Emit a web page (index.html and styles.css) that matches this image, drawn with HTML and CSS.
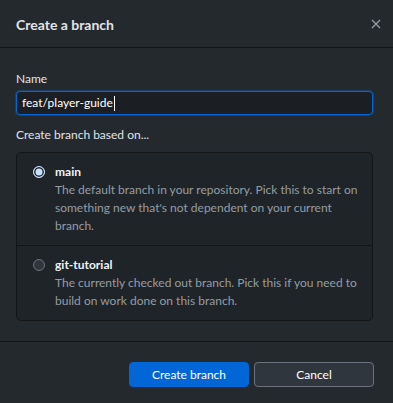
FILE: index.html
```html
<!DOCTYPE html>
<html lang="en">
<head>
    <meta charset="UTF-8">
    <meta name="viewport" content="width=device-width, initial-scale=1.0">
    <title>Create a branch</title>
    <link rel="stylesheet" href="styles.css">
</head>
<body>
    <div class="dialog">
        <header class="dialog-header">
            <h1>Create a branch</h1>
            <button class="close" aria-label="Close">
                <svg width="10" height="10" viewBox="0 0 10 10">
                    <path d="M1 1L9 9M9 1L1 9" stroke="#959da5" stroke-width="1.3" fill="none"/>
                </svg>
            </button>
        </header>
        <div class="dialog-body">
            <label class="field-label">Name</label>
            <div class="text-input">feat/player-guide<span class="caret"></span></div>
            <p class="group-label">Create branch based on...</p>
            <div class="radio-group">
                <div class="radio-item">
                    <span class="radio checked"></span>
                    <div class="radio-text">
                        <div class="radio-title">main</div>
                        <div class="radio-desc">The default branch in your repository. Pick this to start on something new that's not dependent on your current branch.</div>
                    </div>
                </div>
                <div class="radio-item">
                    <span class="radio"></span>
                    <div class="radio-text">
                        <div class="radio-title">git-tutorial</div>
                        <div class="radio-desc">The currently checked out branch. Pick this if you need to build on work done on this branch.</div>
                    </div>
                </div>
            </div>
        </div>
        <footer class="dialog-footer">
            <button class="btn btn-primary">Create branch</button>
            <button class="btn btn-default">Cancel</button>
        </footer>
    </div>
</body>
</html>
```

FILE: styles.css
```css
body {
    margin: 0;
    padding: 0;
    background-color: #24292e;
    font-family: Lato, "Noto Sans", sans-serif;
    font-size: 12px;
    color: #e1e4e8;
}
.dialog {
    width: 393px;
    height: 403px;
    display: flex;
    flex-direction: column;
}
.dialog-header {
    height: 48px;
    box-sizing: border-box;
    border-bottom: 1px solid #141414;
    display: flex;
    align-items: center;
    justify-content: space-between;
    padding: 1px 11px 0 16px;
}
.dialog-header h1 {
    margin: 0;
    font-size: 14px;
    font-weight: 700;
    color: #e1e4e8;
}
.close {
    background: none;
    border: none;
    padding: 0;
    width: 12px;
    height: 12px;
    display: flex;
    align-items: center;
    justify-content: center;
}
.dialog-body {
    padding: 23px 20px 20px 16px;
    border-bottom: 1px solid #141414;
}
.field-label {
    display: block;
    line-height: 16px;
    margin-bottom: 4px;
}
.text-input {
    height: 24px;
    box-sizing: border-box;
    border: 1px solid #0366d6;
    box-shadow: 0 0 0 1px rgba(3, 102, 214, 0.35);
    border-radius: 4px;
    background-color: #1b1f23;
    padding: 0 5px;
    line-height: 22px;
    color: #ffffff;
    display: flex;
    align-items: center;
}
.caret {
    display: inline-block;
    width: 1px;
    height: 15px;
    background-color: #ffffff;
    margin-left: 1px;
}
.group-label {
    margin: 12px 0 9px;
    line-height: 16px;
}
.radio-group {
    border: 1px solid #141414;
    border-radius: 5px;
    background-color: #1f2428;
}
.radio-item {
    display: flex;
    gap: 10px;
    padding: 10px 14px 10px 16px;
}
.radio-item + .radio-item {
    border-top: 1px solid #141414;
}
.radio {
    flex: none;
    width: 12px;
    height: 12px;
    box-sizing: border-box;
    margin-top: 3px;
    border-radius: 50%;
    border: 1px solid #6a737d;
    background-color: #2f363d;
}
.radio.checked {
    border: 1.5px solid #c8e1ff;
    background-color: #c8e1ff;
    box-shadow: inset 0 0 0 1.5px #1f2428;
}
.radio-title {
    font-weight: 700;
    line-height: 18px;
    color: #f0f3f6;
}
.radio-desc {
    line-height: 18px;
    color: #959da5;
}
.dialog-footer {
    display: flex;
    justify-content: flex-end;
    gap: 5px;
    padding: 20px 19px 16px 16px;
}
.btn {
    width: 120px;
    height: 25px;
    border-radius: 4px;
    font-family: Lato, "Noto Sans", sans-serif;
    font-size: 12px;
    cursor: pointer;
}
.btn-primary {
    background-color: #0366d6;
    border: 1px solid #0366d6;
    color: #ffffff;
}
.btn-default {
    background-color: #2f363d;
    border: 1px solid #6a737d;
    color: #ffffff;
}
```
